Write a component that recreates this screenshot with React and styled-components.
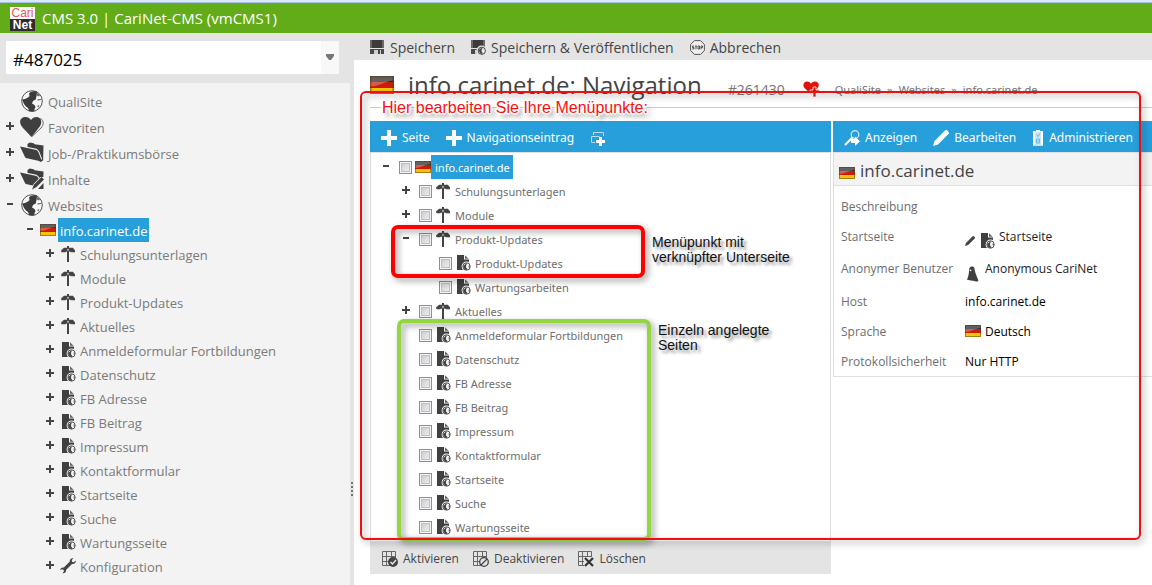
import React from "react";
import styled, { createGlobalStyle, css } from "styled-components";

const GlobalStyle = createGlobalStyle`
  * { box-sizing: border-box; }

  body {
    margin: 0;
    background: #fff;
    color: #444;
    font-family: "Open Sans", "Noto Sans", sans-serif;
    font-size: 13px;
    overflow: hidden;
  }

  svg {
    display: block;
    flex-shrink: 0;
  }

  ul, h1, h2, p {
    margin: 0;
    padding: 0;
    list-style: none;
    font-weight: normal;
  }

  button, input {
    font-family: inherit;
  }
`;

const Page = styled.div`
  display: flex;
  flex-direction: column;
  min-height: 100vh;
`;

const TopBar = styled.header`
  display: flex;
  align-items: center;
  gap: 7px;
  height: 33px;
  padding: 0 10px;
  border-top: 2px solid #dce9f8;
  background: #62ab19;
  box-shadow: inset 0 1px 0 #a6c3e4;
  color: #fff;
  font-size: 15px;
`;

const Logo = styled.div`
  display: flex;
  flex-direction: column;
  width: 25px;
  margin-top: 2px;
  background: #fff;
  font-family: "Liberation Sans", sans-serif;
  font-size: 12px;
  line-height: 12px;
  text-align: center;

  span {
    color: #e8535a;
  }

  b {
    background: #2f2b30;
    color: #fff;
  }
`;

const Body = styled.div`
  display: flex;
  flex: 1;
`;

const Sidebar = styled.aside`
  flex: 0 0 350px;
  background: #f3f3f3;
`;

const SearchBar = styled.div`
  padding: 8px 11px 9px 6px;
  background: #e4e4e4;
`;

const SearchBox = styled.div`
  display: flex;
  height: 33px;
  background: #fff;

  input {
    flex: 1;
    min-width: 0;
    padding: 4px 7px 0;
    border: 0;
    outline: 0;
    background: transparent;
    font-size: 17px;
    color: #000;
  }

  button {
    display: flex;
    align-items: center;
    justify-content: center;
    width: 18px;
    padding: 0;
    border: 0;
    background: #f8f8f8;
  }
`;

const Splitter = styled.div`
  display: flex;
  flex: 0 0 4px;
  flex-direction: column;
  align-items: center;
  justify-content: flex-end;
  gap: 2px;
  padding-bottom: 89px;
  background: #e4e4e4;

  i {
    width: 2px;
    height: 2px;
    background: #777;
  }
`;

const SideTree = styled.ul`
  padding: 5px 0 5px 4px;
`;

const SideRow = styled.li`
  display: flex;
  align-items: center;
  height: ${(p) => (p.$level ? 24 : 26)}px;
  padding-left: ${(p) => p.$level * 20}px;
`;

const Toggle = styled.button`
  display: flex;
  align-items: center;
  justify-content: center;
  width: 12px;
  height: 12px;
  margin: 0 4px 2px 0;
  padding: 0;
  border: 0;
  background: none;
  visibility: ${(p) => (p.$hidden ? "hidden" : "visible")};
`;

const active = css`
  background: #269fdb;
  color: #fff;
`;

const SideLink = styled.a`
  height: 24px;
  margin-left: 2px;
  padding: 0 2px;
  font-size: 13px;
  line-height: 26px;
  color: #7a7a7a;
  text-decoration: none;
  white-space: nowrap;
  ${(p) => p.$active && active}
`;

const Main = styled.main`
  position: relative;
  flex: 1;
  min-width: 0;
`;

const Toolbar = styled.div`
  display: flex;
  align-items: center;
  gap: 16px;
  height: 27px;
  padding: 2px 16px 0;
  background: #e4e4e4;
`;

const ToolButton = styled.button`
  display: flex;
  align-items: center;
  gap: 5px;
  padding: 0;
  border: 0;
  background: none;
  color: #444;
  font-size: ${(p) => p.$size || 14}px;
  white-space: nowrap;
`;

const TitleRow = styled.div`
  display: flex;
  align-items: center;
  height: 48px;
  margin-left: 16px;
  padding-top: 2px;
  border-bottom: 1px solid #ccc;

  h1 {
    margin-left: 14px;
    font-size: 24px;
    line-height: 46px;
    color: #444;
    white-space: nowrap;
  }
`;

const Meta = styled.div`
  display: flex;
  align-items: center;
  padding: 9px 0 0 26px;
`;

const PageId = styled.span`
  margin-right: 18px;
  font-size: 14px;
  color: #777;
`;

const Breadcrumb = styled.nav`
  display: flex;
  gap: 6px;
  margin-left: 15px;
  font-family: "Noto Sans", sans-serif;
  font-size: 11px;
  color: #777;
  white-space: nowrap;

  a {
    color: #777;
    text-decoration: none;
  }
`;

const Columns = styled.div`
  display: grid;
  grid-template-columns: 461fr 319fr;
  gap: 2px;
  align-items: start;
  margin: 13px 0 0 16px;
`;

const BlueBar = styled.div`
  display: flex;
  align-items: center;
  gap: 16px;
  height: 31px;
  padding: 2px 11px 0;
  background: #269fdb;
  font-family: "Noto Sans", sans-serif;

  ${ToolButton} {
    color: #fff;
  }
`;

const TreePanel = styled.div`
  position: relative;
  padding: 2px 0 2px 9px;
  border: 1px solid #e0e0e0;
  border-bottom: 0;
`;

const TreeRow = styled.li`
  display: flex;
  align-items: center;
  height: 24px;
  padding-left: ${(p) => p.$level * 20}px;

  label {
    display: flex;
    align-items: center;
    font-family: "Noto Sans", sans-serif;
    font-size: 11px;
    color: #6e6e6e;
    white-space: nowrap;
  }
`;

const TreeText = styled.span`
  height: 24px;
  padding: 0 3px 0 4px;
  line-height: 25px;
  ${(p) => p.$active && active}
`;

const Tick = styled.input`
  appearance: none;
  width: 13px;
  height: 13px;
  margin: 0 3px;
  border: 1px solid #8e8f8f;
  background: linear-gradient(135deg, #c4c8cf, #f4f4f4);
  box-shadow: inset 0 0 0 1px #f4f4f4, inset 0 0 0 2px #bcc1c8;
`;

const FooterBar = styled.div`
  display: flex;
  align-items: center;
  gap: 14px;
  height: 33px;
  padding: 2px 12px 0;
  background: #e4e4e4;
`;

const Heading = styled.div`
  display: flex;
  align-items: center;
  gap: 5px;
  height: 34px;
  padding: 7px 5px 0;
  border: 1px solid #e0e0e0;
  border-right: 0;
  background: #f3f3f3;

  h2 {
    padding-bottom: 4px;
    font-size: 17px;
    line-height: 24px;
  }
`;

const Info = styled.div`
  padding: 5px 0 0 7px;
  border-left: 1px solid #e0e0e0;
  border-bottom: 1px solid #e0e0e0;

  table {
    border-collapse: collapse;
  }

  th {
    width: 124px;
    padding: 0;
    font-size: 12px;
    font-weight: normal;
    text-align: left;
    color: #6e6e6e;
    white-space: nowrap;
  }

  td {
    padding: 0;
    font-size: 12px;
    color: #000;
    white-space: nowrap;
  }
`;

const InfoRow = styled.tr`
  height: ${(p) => (p.$tall ? 35 : 30)}px;
`;

const Value = styled.div`
  display: flex;
  align-items: center;
  gap: 4px;

  a {
    color: #222;
    text-decoration: none;
  }
`;

const LowIcon = styled.span`
  padding-top: 8px;
  margin-bottom: -2px;
`;

// the annotations lie on top of the application
const Frame = styled.div`
  position: absolute;
  pointer-events: none;
  filter: drop-shadow(3px 3px 3px rgba(0, 0, 0, 0.4));
`;

const PageFrame = styled(Frame)`
  top: 58px;
  left: 6px;
  right: 11px;
  bottom: 45px;
  border: 2px solid #f00f0f;
  border-radius: 6px;
`;

const MenuFrame = styled(Frame)`
  top: 72px;
  left: 20px;
  width: 254px;
  height: 53px;
  border: 4px solid #f00;
  border-radius: 7px;
`;

const PagesFrame = styled(Frame)`
  top: 166px;
  left: 26px;
  width: 254px;
  height: 222px;
  border: 4px solid #92d640;
  border-radius: 7px;
`;

const Note = styled.p`
  position: absolute;
  top: ${(p) => p.$top}px;
  left: ${(p) => p.$left}px;
  font-family: "Liberation Sans", sans-serif;
  font-size: 14px;
  line-height: 15px;
  color: #111;
  white-space: nowrap;
  text-shadow: 3px 3px 3px rgba(0, 0, 0, 0.45);
`;

const RedNote = styled(Note)`
  font-size: 16px;
  line-height: 20px;
  color: #f81111;
  text-shadow: -1px -1px 1px #fff, 1px -1px 1px #fff, -1px 1px 1px #fff,
    1px 1px 1px #fff, 0 2px 1px #fff, 0 -2px 1px #fff, 2px 0 1px #fff,
    -2px 0 1px #fff, 4px 4px 4px rgba(0, 0, 0, 0.5);
`;

const Sign = ({ open }) => (
  <svg width="8" height="8" viewBox="0 0 8 8" fill="#444">
    {open ? <path d="M1 3h6v2H1z" /> : <path d="M3 0h2v3h3v2H5v3H3V5H0V3h3z" />}
  </svg>
);

const GlobeIcon = () => (
  <svg width="24" height="24" viewBox="0 0 24 24">
    <circle cx="12" cy="12" r="10.300" fill="#f6f6f6" stroke="#555" strokeWidth="1" />
    <path d="M2 10.500l3-.5 3-1.500L9.500 7 9 4.500 10.500 3l4-1 2.500.8-.3 3.400-1 4.300-2.700 1.500-1 2.500 2.500 1.500 1 2-1.500 3.500 1 1H9.500L8 19l-2-1.500L4 15z" fill="#3c3c3c" />
    <path d="M17 4l3 2-1 1.500-2-1zM17.500 10.200l3.500-.2.300 1-2.300.3-1.500.4zM17 17l2.500-1-1 2.500z" fill="#666" />
  </svg>
);

const FlagIcon = ({ size = 16 }) => (
  <svg width={size} height={(size * 3) / 4} viewBox="0 0 16 12">
    <path d="M0 0h16v4H0z" fill="#252525" />
    <path d="M0 4h16v4H0z" fill="#cc1c05" />
    <path d="M0 8h16v4H0z" fill="#f9c20a" />
    <path d="M0 0h16v3C11 3 6 7 0 7z" fill="#fff" opacity=".28" />
    <rect x=".5" y=".5" width="15" height="11" fill="none" stroke="#5b3410" strokeOpacity=".5" />
  </svg>
);

const PageIcon = () => (
  <svg width="16" height="16" viewBox="0 0 16 16">
    <path d="M2 0h7v4.500h5V15H2z" fill="#404040" />
    <path d="M10 .3l3.700 3.400H10z" fill="#666" />
    <circle cx="11.500" cy="11.500" r="4.900" fill="#f6f6f6" />
    <circle cx="11.500" cy="11.500" r="3.700" fill="#f6f6f6" stroke="#555" strokeWidth="1" />
    <path d="M8 11l2-1.500 1-1.200 1 .3-1 2.200.2 2 1.300 1.300-1 .9-2-.8z" fill="#444" />
    <path d="M13.500 10.500h1.300v2h-1z" fill="#555" />
  </svg>
);

const NavIcon = () => (
  <svg width="16" height="16" viewBox="0 0 16 16" fill="#444">
    <path d="M7 0h2v16H7z" />
    <path d="M1 4.500L4 1.800h3L8 3l1.200-1.200h3.600L15 4.300v1.900h-3.500L8 5 5 6.200H1.500z" />
    <path d="M7.300 3.200L8 2.400l.7.9v1.500H7.300z" fill="#ccc" />
  </svg>
);

const WrenchIcon = () => (
  <svg width="16" height="16" viewBox="0 0 16 16" fill="#444">
    <path d="M15.800 2.600l-2 1.600-1.800-.5-.2-1.700L13.500.3c-2-.6-4 .8-3.700 3.200l-6 6.100C1.700 9.200.2 10.500.2 12.200l1.500-1 1.900.5.300 1.900-1.500 1.600c2.200.5 4-1 3.600-3.300l6-6c2.300.3 4-1.300 3.800-3.300z" />
  </svg>
);

const HeartIcon = () => (
  <svg width="24" height="24" viewBox="0 0 24 24">
    <path d="M20.500 3.500c3.500 2 3.500 6 .5 9.500L12 21.500" fill="#f6f6f6" stroke="#666" strokeWidth="1" />
    <path d="M11.500 22L3 13C-.5 9-.6 5.500 1.500 3.500 4.500 1 9 1.800 11 5c2-3.200 6-4 8.500-2 2.600 2.200 2.300 6-.5 9.500z" fill="#3f3f3f" />
  </svg>
);

const FolderIcon = ({ edit }) => (
  <svg width="24" height="24" viewBox="0 0 24 24">
    <path d="M7.500 6V3l2.200-1.400 4 .6.800 1 9 1.300-.4 15-3 1.500z" fill="#404040" />
    <path d="M0 5.500l15 3c2 .3 2.400 1.500 3 3l3.500 9-14.500-3.200C5 17 5 16 4 14z" fill="#404040" />
    <path d="M6.500 6.200l10 2.200c1.600.5 2 1.800 2.600 3l2.600 7" fill="none" stroke="#f3f3f3" strokeWidth="1.100" />
    {edit && (
      <>
        <path d="M10.500 23l3-6 7-7H24v14H10.500z" fill="#f3f3f3" />
        <path d="M12 22.500l2-5 7.500-7.500 2.500 2.500-7.500 7.500z" fill="#404040" />
        <path d="M18 22l5.500-6v6z" fill="#404040" />
      </>
    )}
  </svg>
);

const SaveIcon = ({ web }) => (
  <svg width="15" height="15" viewBox="0 0 15 15">
    <path d="M0 0h14v14H0z" fill="#4a4a4a" />
    <path d="M2 0h10v8H2z" fill="#3c3c3c" />
    <path d="M1 0v8M13 0v8" stroke="#8a8a8a" />
    <path d="M0 8h14v1H0z" fill="#e4e4e4" />
    <path d="M4 10h7v4H4z" fill="#cfcfcf" />
    <path d="M8 10h2v4H8z" fill="#444" />
    {web && (
      <>
        <circle cx="10.500" cy="10.500" r="5" fill="#e4e4e4" />
        <circle cx="10.800" cy="10.800" r="3.600" fill="#eee" stroke="#444" strokeWidth="1" />
        <path d="M7.500 10l2-1.300 1-1 1 .5-1 2 .2 1.800 1.300 1-1.500 1-1.500-1z" fill="#444" />
      </>
    )}
  </svg>
);

const StopIcon = () => (
  <svg width="15" height="15" viewBox="0 0 15 15">
    <path d="M4.500.6h6l3.900 3.900v6l-3.900 3.900h-6L.6 10.500v-6z" fill="#eee" stroke="#555" strokeWidth="1" />
    <path d="M4 6H2.500v1.500H4V9H2.300M5 6h2M6 6v3.200M8 6h1.500v3H8zM11 9.300V6h1.500v1.700H11" fill="none" stroke="#444" strokeWidth=".9" />
  </svg>
);

const PlusIcon = () => (
  <svg width="16" height="16" viewBox="0 0 16 16" fill="#fff"><path d="M6 0h4v6h6v4h-6v6H6v-6H0V6h6z" /></svg>
);

const CopyPlusIcon = () => (
  <svg width="16" height="16" viewBox="0 0 16 16">
    <path d="M3.500 5V2.500h10V6M1.500 12.500v-6h8M1.500 12.500H5" fill="none" stroke="#b9def3" />
    <path d="M9 7h3v3h3v3h-3v3H9v-3H6v-3h3z" fill="#fff" />
  </svg>
);

const ViewIcon = () => (
  <svg width="16" height="16" viewBox="0 0 16 16">
    <circle cx="11" cy="4.500" r="3.800" fill="#269fdb" stroke="#d8edf8" strokeWidth="1.200" />
    <path d="M8.500 7.500L1 15" stroke="#fff" strokeWidth="2.200" />
    <path d="M7 9h4V6.500l5 4.800-5 4.700V13H7z" fill="#fff" />
  </svg>
);

const PencilIcon = ({ size = 16, color = "#fff" }) => (
  <svg width={size} height={size} viewBox="0 0 16 16" fill={color}>
    <path d="M0 16l1.500-5L11 1.500 12.500 0h1.300L16 2.200v1.300L5 14.500z" />
  </svg>
);

const AdminIcon = () => (
  <svg width="12" height="16" viewBox="0 0 12 16">
    <path d="M1 1h10v15H1z" fill="#c5e4f5" />
    <path d="M1 1h2v14H1zM9 1h2v14H9zM4 0h4v2H4z" fill="#fff" />
    <path d="M4.500 4.500l1.500 2 2-3M4.500 9h3v4h-3zM5.500 11h1.500" fill="none" stroke="#6cbce5" />
  </svg>
);

const GhostIcon = () => (
  <svg width="16" height="16" viewBox="0 0 16 16">
    <path d="M4.500 2C6 0 9 0 9.500 2.500c.2 3 1.500 6 4 12l-1.500 1.300-2-.6-2-.4-2.200-.4-3.800-.6C3 11 4.200 8 4 4z" fill="#404040" />
    <circle cx="5.500" cy="4.300" r=".9" fill="#fff" />
  </svg>
);

const HeartPlusIcon = () => (
  <svg width="17" height="16" viewBox="0 0 17 16">
    <path d="M7.500 12.500L1.500 7C-.5 4.500.3 1 3.500.5 5.500.3 7 1.200 8 2.800 9 1.200 10.500.3 12.500.5 16 1 16.800 4.500 14.500 7L12 10z" fill="#e01408" />
    <path d="M10 6h3v3h3.500v3H13v4h-3v-4H7V9h3z" fill="#e01408" stroke="#fff" strokeWidth=".8" />
  </svg>
);

const GridIcon = ({ kind }) => (
  <svg width="16" height="16" viewBox="0 0 16 16" fill="none">
    <path d="M.5 14.500V.5h13v14zM.5 5.500h13M.5 10.500h13M4.500.5v14M9.500.5v14" stroke="#666" />
    {kind === "on" && (
      <>
        <circle cx="11" cy="11" r="5" fill="#444" />
        <path d="M8.500 11l2 2 3.500-4" stroke="#e4e4e4" strokeWidth="1.500" />
      </>
    )}
    {kind === "off" && (
      <>
        <circle cx="11" cy="11" r="4.300" fill="#e4e4e4" stroke="#444" strokeWidth="1.300" />
        <path d="M8 14l6-6" stroke="#444" strokeWidth="1.300" />
      </>
    )}
    {kind === "delete" && (
      <>
        <path d="M6 6h10v10H6z" fill="#e4e4e4" />
        <path d="M7 7l8 8M15 7l-8 8" stroke="#333" strokeWidth="2.200" />
      </>
    )}
  </svg>
);

const icons = {
  globe: <GlobeIcon />,
  heart: <HeartIcon />,
  folder: <FolderIcon />,
  folderEdit: <FolderIcon edit />,
  flag: <FlagIcon />,
  nav: <NavIcon />,
  page: <PageIcon />,
  wrench: <WrenchIcon />,
};

// level, toggle, icon, text
const sideItems = [
  [0, "", "globe", "QualiSite"],
  [0, "+", "heart", "Favoriten"],
  [0, "+", "folder", "Job-/Praktikumsbörse"],
  [0, "+", "folderEdit", "Inhalte"],
  [0, "-", "globe", "Websites"],
  [1, "-", "flag", "info.carinet.de"],
  [2, "+", "nav", "Schulungsunterlagen"],
  [2, "+", "nav", "Module"],
  [2, "+", "nav", "Produkt-Updates"],
  [2, "+", "nav", "Aktuelles"],
  [2, "+", "page", "Anmeldeformular Fortbildungen"],
  [2, "+", "page", "Datenschutz"],
  [2, "+", "page", "FB Adresse"],
  [2, "+", "page", "FB Beitrag"],
  [2, "+", "page", "Impressum"],
  [2, "+", "page", "Kontaktformular"],
  [2, "+", "page", "Startseite"],
  [2, "+", "page", "Suche"],
  [2, "+", "page", "Wartungsseite"],
  [2, "+", "wrench", "Konfiguration"],
];

const treeItems = [
  [0, "-", "flag", "info.carinet.de"],
  [1, "+", "nav", "Schulungsunterlagen"],
  [1, "+", "nav", "Module"],
  [1, "-", "nav", "Produkt-Updates"],
  [2, "", "page", "Produkt-Updates"],
  [2, "", "page", "Wartungsarbeiten"],
  [1, "+", "nav", "Aktuelles"],
  [1, "", "page", "Anmeldeformular Fortbildungen"],
  [1, "", "page", "Datenschutz"],
  [1, "", "page", "FB Adresse"],
  [1, "", "page", "FB Beitrag"],
  [1, "", "page", "Impressum"],
  [1, "", "page", "Kontaktformular"],
  [1, "", "page", "Startseite"],
  [1, "", "page", "Suche"],
  [1, "", "page", "Wartungsseite"],
];

const App = () => {
  return (
    <Page>
      <GlobalStyle />
      <TopBar>
        <Logo><span>Cari</span><b>Net</b></Logo>
        <span>CMS 3.0 | CariNet-CMS (vmCMS1)</span>
      </TopBar>
      <Body>
        <Sidebar>
          <SearchBar>
            <SearchBox>
              <input aria-label="Suche" defaultValue="#487025" />
              <button aria-label="Liste">
                <svg width="8" height="7" viewBox="0 0 8 7" fill="#777"><path d="M0 0h8v2L5 6H3L0 2z" /></svg>
              </button>
            </SearchBox>
          </SearchBar>
          <SideTree>
            {sideItems.map(([level, toggle, icon, text]) => (
              <SideRow key={text} $level={level}>
                <Toggle $hidden={!toggle} aria-label={text}><Sign open={toggle === "-"} /></Toggle>
                {icons[icon]}
                <SideLink href="#" $active={level === 1}>{text}</SideLink>
              </SideRow>
            ))}
          </SideTree>
        </Sidebar>
        <Splitter><i /><i /><i /><i /></Splitter>

        <Main>
          <Toolbar>
            <ToolButton><SaveIcon />Speichern</ToolButton>
            <ToolButton><SaveIcon web />Speichern &amp; Veröffentlichen</ToolButton>
            <ToolButton><StopIcon />Abbrechen</ToolButton>
          </Toolbar>
          <TitleRow>
            <FlagIcon size={24} />
            <h1>info.carinet.de: Navigation</h1>
            <Meta>
              <PageId>#261430</PageId>
              <HeartPlusIcon />
              <Breadcrumb>
                <a href="#">QualiSite</a>»<a href="#">Websites</a>»<a href="#">info.carinet.de</a>
              </Breadcrumb>
            </Meta>
          </TitleRow>

          <Columns>
            <section>
              <BlueBar>
                <ToolButton $size={12}><PlusIcon />Seite</ToolButton>
                <ToolButton $size={12}><PlusIcon />Navigationseintrag</ToolButton>
                <ToolButton aria-label="Kopieren"><CopyPlusIcon /></ToolButton>
              </BlueBar>
              <TreePanel>
                <ul>
                  {treeItems.map(([level, toggle, icon, text], i) => (
                    <TreeRow key={i} $level={level}>
                      <Toggle $hidden={!toggle} aria-label={text}><Sign open={toggle === "-"} /></Toggle>
                      <label>
                        <Tick type="checkbox" />
                        {icons[icon]}
                        <TreeText $active={level === 0}>{text}</TreeText>
                      </label>
                    </TreeRow>
                  ))}
                </ul>
                <MenuFrame />
                <PagesFrame />
                <Note $top={82} $left={281}>Menüpunkt mit<br />verknüpfter Unterseite</Note>
                <Note $top={170} $left={287}>Einzeln angelegte<br />Seiten</Note>
              </TreePanel>
              <FooterBar>
                <ToolButton $size={12}><GridIcon kind="on" />Aktivieren</ToolButton>
                <ToolButton $size={12}><GridIcon kind="off" />Deaktivieren</ToolButton>
                <ToolButton $size={12}><GridIcon kind="delete" />Löschen</ToolButton>
              </FooterBar>
            </section>

            <section>
              <BlueBar>
                <ToolButton $size={12}><ViewIcon />Anzeigen</ToolButton>
                <ToolButton $size={12}><PencilIcon />Bearbeiten</ToolButton>
                <ToolButton $size={12}><AdminIcon />Administrieren</ToolButton>
              </BlueBar>
              <Heading>
                <FlagIcon />
                <h2>info.carinet.de</h2>
              </Heading>
              <Info>
                <table>
                  <tbody>
                    <InfoRow><th scope="row">Beschreibung</th><td /></InfoRow>
                    <InfoRow>
                      <th scope="row">Startseite</th>
                      <td>
                        <Value>
                          <LowIcon><PencilIcon size={10} color="#444" /></LowIcon>
                          <LowIcon><PageIcon /></LowIcon>
                          <a href="#">Startseite</a>
                        </Value>
                      </td>
                    </InfoRow>
                    <InfoRow $tall>
                      <th scope="row">Anonymer Benutzer</th>
                      <td><Value><LowIcon><GhostIcon /></LowIcon><a href="#">Anonymous CariNet</a></Value></td>
                    </InfoRow>
                    <InfoRow><th scope="row">Host</th><td>info.carinet.de</td></InfoRow>
                    <InfoRow><th scope="row">Sprache</th><td><Value><FlagIcon />Deutsch</Value></td></InfoRow>
                    <InfoRow><th scope="row">Protokollsicherheit</th><td>Nur HTTP</td></InfoRow>
                  </tbody>
                </table>
              </Info>
            </section>
          </Columns>
          <PageFrame />
          <RedNote $top={65} $left={28}>Hier bearbeiten Sie Ihre Menüpunkte:</RedNote>
        </Main>
      </Body>
    </Page>
  );
};

export default App;
